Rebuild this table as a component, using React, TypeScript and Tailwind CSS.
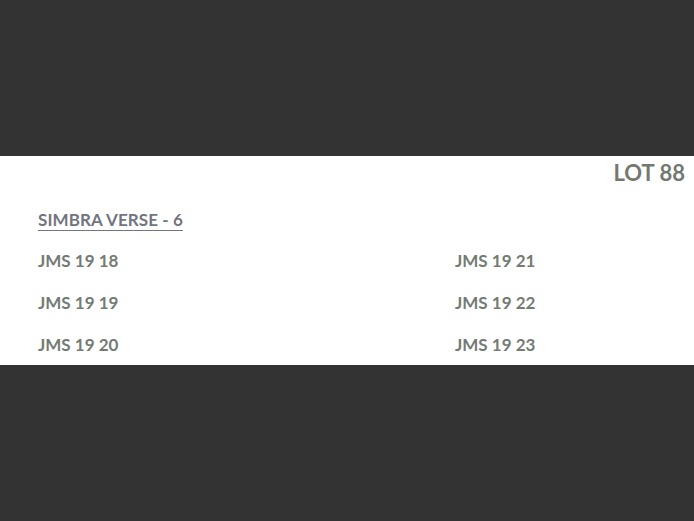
import React from 'react'

const left = ['JMS 19 18', 'JMS 19 19', 'JMS 19 20']
const right = ['JMS 19 21', 'JMS 19 22', 'JMS 19 23']

export default function App() {
  return (
    <div className="w-[694px] h-[521px] bg-[#333333] flex flex-col" style={{ fontFamily: 'Lato, "Open Sans", sans-serif' }}>
      <div className="h-[156px]" />
      <div className="h-[209px] bg-white relative">
        <div className="flex justify-end pr-[9px] pt-[2px]">
          <span className="text-[22px] font-bold text-[#737870] leading-[30px]">LOT 88</span>
        </div>
        <div className="pl-[38px] pt-[20px]">
          <span className="text-[17px] font-bold text-[#72757f] underline decoration-[1px] underline-offset-[4px] leading-[22px] tracking-[0.1px]">SIMBRA VERSE - 6</span>
        </div>
        <div className="grid grid-cols-[417px_1fr] pl-[38px] pt-[17px]">
          <div className="flex flex-col gap-[19px]">
            {left.map((t) => (
              <span key={t} className="text-[17px] font-bold text-[#747b74] leading-[23px]">{t}</span>
            ))}
          </div>
          <div className="flex flex-col gap-[19px]">
            {right.map((t) => (
              <span key={t} className="text-[17px] font-bold text-[#747b74] leading-[23px]">{t}</span>
            ))}
          </div>
        </div>
      </div>
      <div className="flex-1" />
    </div>
  )
}
